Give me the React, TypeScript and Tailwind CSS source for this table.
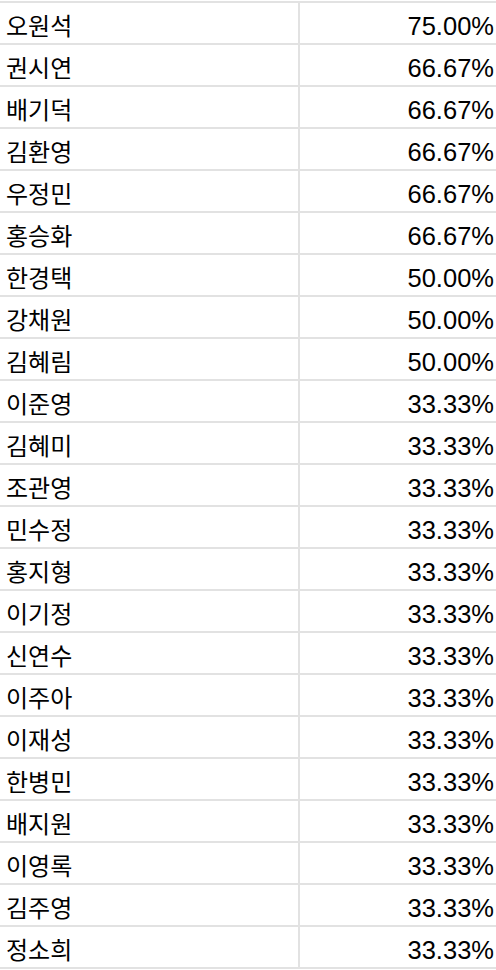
import React from "react";

interface Row {
  name: string;
  rate: string;
}

const rows: Row[] = [
  { name: "오원석", rate: "75.00%" },
  { name: "권시연", rate: "66.67%" },
  { name: "배기덕", rate: "66.67%" },
  { name: "김환영", rate: "66.67%" },
  { name: "우정민", rate: "66.67%" },
  { name: "홍승화", rate: "66.67%" },
  { name: "한경택", rate: "50.00%" },
  { name: "강채원", rate: "50.00%" },
  { name: "김혜림", rate: "50.00%" },
  { name: "이준영", rate: "33.33%" },
  { name: "김혜미", rate: "33.33%" },
  { name: "조관영", rate: "33.33%" },
  { name: "민수정", rate: "33.33%" },
  { name: "홍지형", rate: "33.33%" },
  { name: "이기정", rate: "33.33%" },
  { name: "신연수", rate: "33.33%" },
  { name: "이주아", rate: "33.33%" },
  { name: "이재성", rate: "33.33%" },
  { name: "한병민", rate: "33.33%" },
  { name: "배지원", rate: "33.33%" },
  { name: "이영록", rate: "33.33%" },
  { name: "김주영", rate: "33.33%" },
  { name: "정소희", rate: "33.33%" },
];

const App: React.FC = () => {
  return (
    <div
      className="w-[496px] h-[970px] overflow-hidden bg-white pt-px text-black"
      style={{ fontFamily: '"Liberation Sans", "Noto Sans CJK KR", sans-serif' }}
    >
      <div className="border-t-2 border-[#e2e2e2]">
        {rows.map((row, i) => (
          <div key={i} className="flex h-[42px] border-b-2 border-[#e2e2e2]">
            {/* name cell */}
            <div className="w-[300px] flex items-center pl-[6px] pt-[7px] text-[24px] leading-none border-r-2 border-[#e2e2e2]">
              {row.name}
            </div>
            {/* rate cell */}
            <div className="flex-1 flex items-center justify-end pr-[2px] pt-[7px] text-[25.5px] leading-none">
              {row.rate}
            </div>
          </div>
        ))}
      </div>
    </div>
  );
};

export default App;
